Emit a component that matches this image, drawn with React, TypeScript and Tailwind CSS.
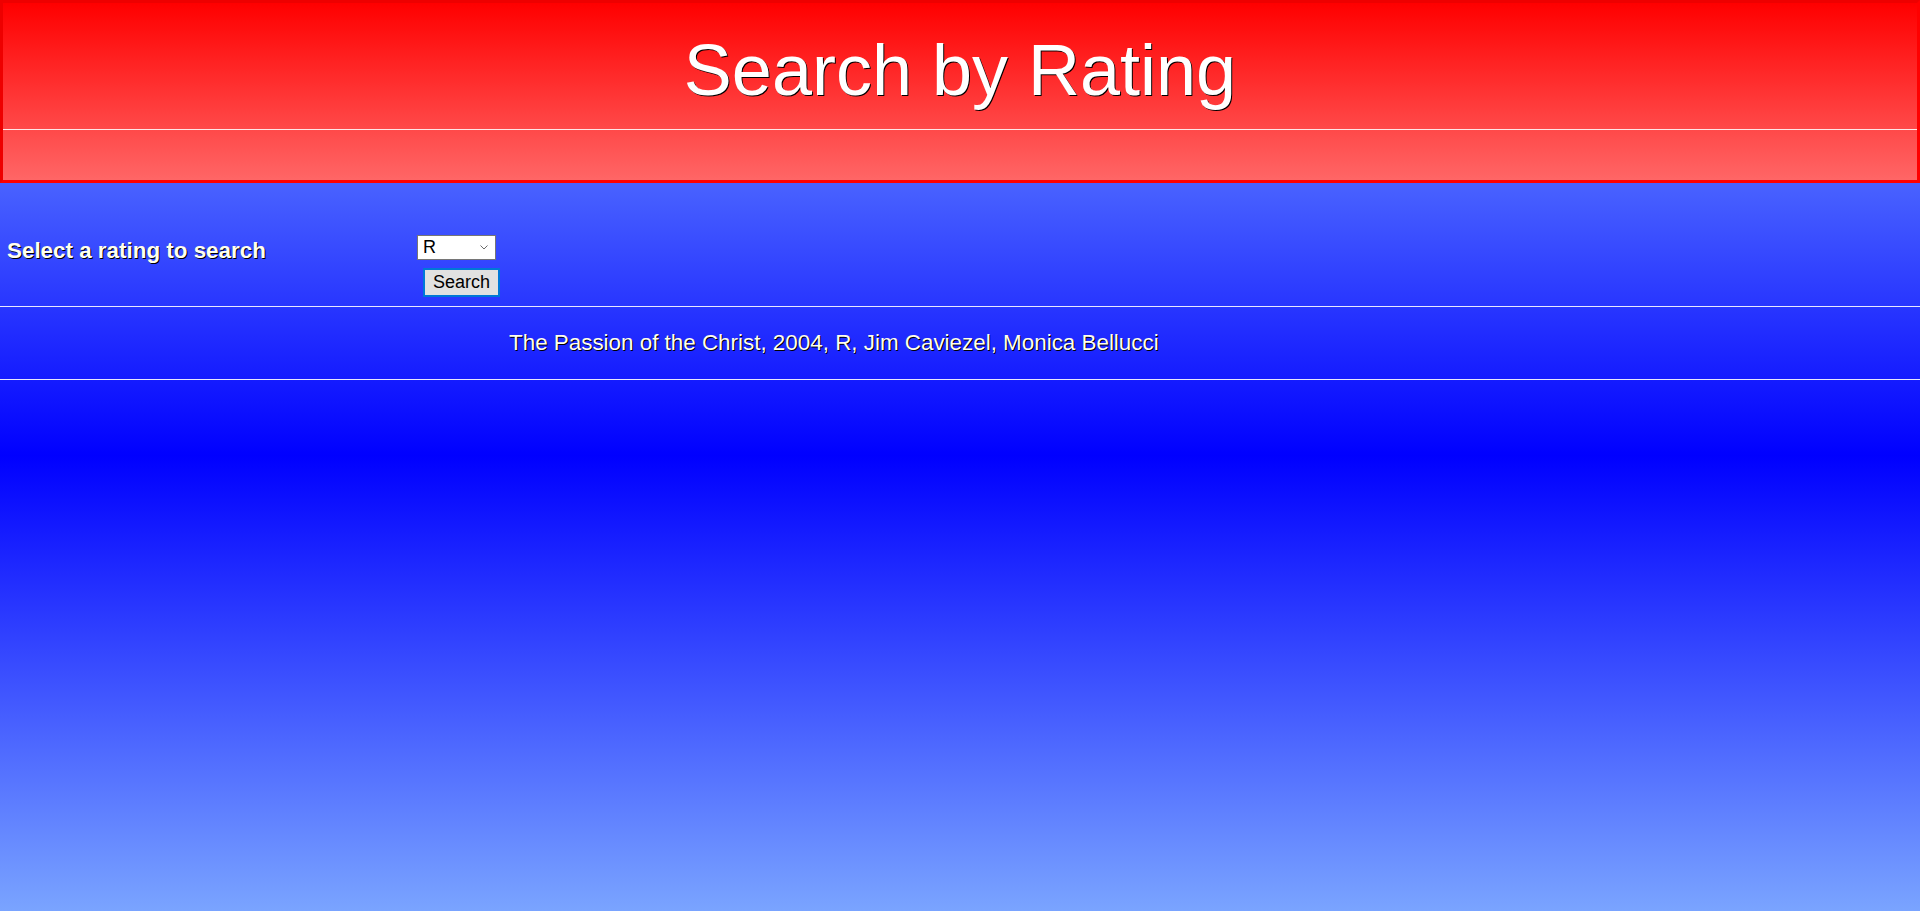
import { useState } from 'react';

const RATINGS = ['G', 'PG', 'PG-13', 'R', 'NC-17'];

const movies = [
  { title: 'The Passion of the Christ', year: 2004, rating: 'R', actors: ['Jim Caviezel', 'Monica Bellucci'] },
];

export default function App() {
  const [rating, setRating] = useState('R');
  const [results, setResults] = useState(movies.filter((m) => m.rating === 'R'));

  const handleSearch = (e: React.FormEvent) => {
    e.preventDefault();
    setResults(movies.filter((m) => m.rating === rating));
  };

  return (
    <div className="min-h-[911px] bg-[linear-gradient(to_bottom,#7aa4ff,#0000ff_50%,#7aa4ff)] font-['Liberation_Sans',Arial,sans-serif]">
      <header className="h-[183px] border-[3px] border-t-[#ee0000] border-l-[#ee0000] border-r-[#ff0000] border-b-[#ff0000] bg-[linear-gradient(to_bottom,#ff0000,#ff6666)]">
        <h1 className="pt-[26px] text-center text-[72px] leading-[83px] text-white [text-shadow:1px_1px_0_#000]">
          Search by Rating
        </h1>
        <div className="mt-[17px] h-px bg-[#ffe6e6]" />
      </header>

      <form onSubmit={handleSearch} className="flex border-b border-[#e8e8ff] pt-[52px] pb-[9px]">
        <label
          htmlFor="rating"
          className="w-[417px] pl-[7px] pt-[3px] text-[22.4px] leading-[25px] font-bold text-[#ffffee] [text-shadow:1px_1px_0_#000]"
        >
          Select a rating to search
        </label>
        <div className="flex flex-col items-start">
          <div className="relative">
            <select
              id="rating"
              value={rating}
              onChange={(e) => setRating(e.target.value)}
              className="h-[25px] w-[79px] appearance-none rounded-none border border-[#767676] bg-white pl-[5px] text-[18px] leading-[23px] text-black outline-none"
            >
              {RATINGS.map((r) => (
                <option key={r} value={r}>
                  {r}
                </option>
              ))}
            </select>
            <svg
              className="pointer-events-none absolute right-[8px] top-[10px]"
              width="8"
              height="5"
              viewBox="0 0 8 5"
              fill="none"
            >
              <path d="M0.5 0.5L4 4L7.5 0.5" stroke="#6b6b6b" strokeWidth="1" />
            </svg>
          </div>
          <button
            type="submit"
            className="mt-[8px] ml-[6px] h-[29px] w-[77px] border-2 border-[#0078d7] bg-[#e1e1e1] text-[18px] leading-[21px] text-black"
          >
            Search
          </button>
        </div>
      </form>

      <div className="border-b border-[#e8e8ff] pt-[23px] pb-[24px] pl-[509px]">
        {results.map((m) => (
          <p
            key={m.title}
            className="text-[22.4px] leading-[25px] text-[#ffffee] [text-shadow:1px_1px_0_#000]"
          >
            {m.title}, {m.year}, {m.rating}, {m.actors.join(', ')}
          </p>
        ))}
      </div>
    </div>
  );
}
